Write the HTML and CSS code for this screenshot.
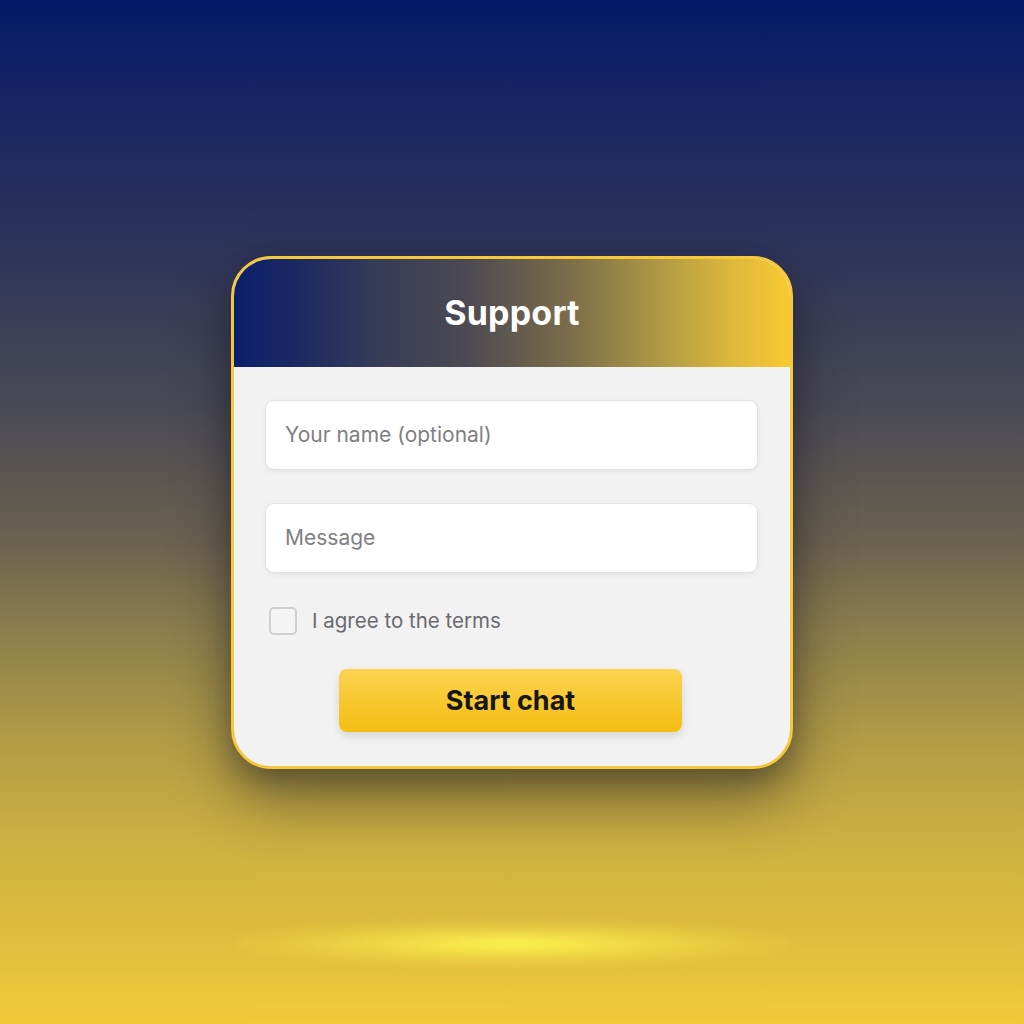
FILE: index.html
```html
<!DOCTYPE html>
<html lang="en">
<head>
<meta charset="utf-8">
<title>Support</title>
<link rel="stylesheet" href="styles.css">
</head>
<body>
<div class="stage">
  <div class="glow"></div>
  <form class="card">
    <div class="card-header">
      <h1 class="title">Support</h1>
    </div>
    <div class="card-body">
      <div class="field">Your name (optional)</div>
      <div class="field">Message</div>
      <label class="agree">
        <span class="box"></span>
        <span class="agree-text">I agree to the terms</span>
      </label>
      <div class="actions">
        <button type="button" class="btn">Start chat</button>
      </div>
    </div>
  </form>
</div>
</body>
</html>
```
FILE: styles.css
```css
html, body {
  margin: 0;
  padding: 0;
}
body {
  font-family: Inter, "Noto Sans", "Liberation Sans", sans-serif;
}
.stage {
  position: relative;
  width: 1024px;
  height: 1024px;
  overflow: hidden;
  display: flex;
  align-items: center;
  justify-content: center;
  background: linear-gradient(180deg,
    #041a68 0%,
    #1a2762 12%,
    #2f3559 25%,
    #4a4a55 40%,
    #6c6250 53%,
    #8e7f4c 62%,
    #b09b46 72%,
    #cdb042 82%,
    #dcbb3e 90%,
    #f2ca3a 100%);
}
.glow {
  position: absolute;
  left: 232px;
  top: 922px;
  width: 560px;
  height: 44px;
  border-radius: 50%;
  background: radial-gradient(ellipse at center,
    rgba(255, 252, 85, 0.95) 0%,
    rgba(255, 240, 80, 0.6) 28%,
    rgba(250, 228, 70, 0.2) 60%,
    rgba(240, 210, 60, 0) 100%);
  filter: blur(5px);
}
.card {
  position: relative;
  width: 556px;
  border: 3px solid #f5c73c;
  border-radius: 40px;
  background: #f2f2f3;
  overflow: hidden;
  box-shadow: 0 30px 60px rgba(20, 18, 30, 0.45), 0 10px 24px rgba(20, 18, 30, 0.25);
  margin: 0;
}
.card-header {
  height: 108px;
  display: flex;
  align-items: center;
  justify-content: center;
  background: linear-gradient(90deg,
    #0b1f6c 0%,
    #1c2a62 12%,
    #353a58 25%,
    #4c4a52 42%,
    #7b6c4a 60%,
    #b09a45 77%,
    #e0b93b 90%,
    #f8c934 100%);
}
.title {
  margin: 0;
  color: #ffffff;
  font-size: 34px;
  font-weight: 700;
  letter-spacing: 0.2px;
}
.card-body {
  padding: 33px 32px 34px 31px;
  display: flex;
  flex-direction: column;
}
.field {
  height: 70px;
  box-sizing: border-box;
  background: #ffffff;
  border: 1px solid #e2e2e4;
  border-radius: 9px;
  box-shadow: 0 2px 5px rgba(0, 0, 0, 0.06);
  display: flex;
  align-items: center;
  padding: 0 19px;
  font-size: 21px;
  color: #808084;
  margin-bottom: 33px;
}
.agree {
  display: flex;
  align-items: center;
  gap: 15px;
  padding-left: 4px;
  margin-top: 1px;
  margin-bottom: 34px;
  height: 28px;
}
.box {
  width: 28px;
  height: 28px;
  box-sizing: border-box;
  border: 2px solid #cfcfd2;
  border-radius: 5px;
  background: #f4f4f5;
}
.agree-text {
  font-size: 20.5px;
  color: #6a6a6e;
}
.actions {
  display: flex;
  justify-content: center;
  padding-right: 2px;
}
.btn {
  width: 343px;
  height: 63px;
  border: none;
  border-radius: 8px;
  background: linear-gradient(180deg, #fcd352 0%, #f7c62a 60%, #f4bd14 100%);
  box-shadow: 0 4px 10px rgba(0, 0, 0, 0.12);
  font-family: Inter, "Noto Sans", "Liberation Sans", sans-serif;
  font-size: 27px;
  font-weight: 700;
  color: #161616;
  cursor: pointer;
}
```
